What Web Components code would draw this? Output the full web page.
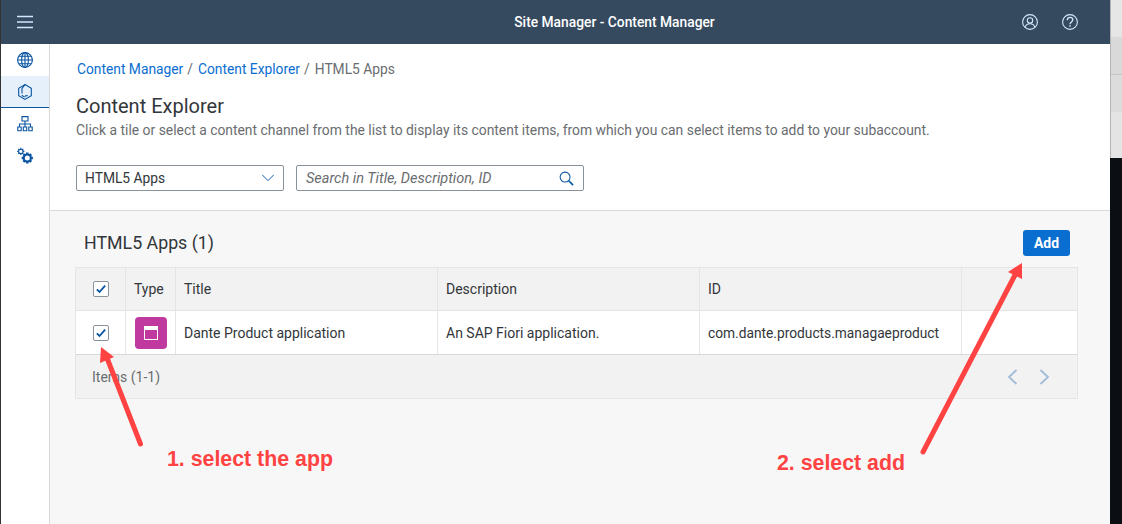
<!DOCTYPE html>
<html>
<head>
<meta charset="utf-8">
<style>
  html, body { margin: 0; height: 100%; overflow: hidden; background: #0b0e12; }
  body { font-family: Roboto, "Liberation Sans", sans-serif; font-size: 14px; color: #32363a; }
</style>
</head>
<body>
<site-manager></site-manager>

<script>
const ICONS = {
  menu: '<path d="M0 2.500h16M0 8h16M0 13.500h16" stroke-width="1.500"/>',
  user: '<circle cx="8" cy="8" r="7.400"/><circle cx="8" cy="6.400" r="2.700"/><path d="M3.200 13.500c.5-2.500 2.400-3.700 4.800-3.700s4.300 1.200 4.800 3.700"/>',
  help: '<circle cx="8" cy="8" r="7.400"/><path d="M5.300 6.200c0-1.700 1.200-2.800 2.800-2.800s2.700 1.100 2.700 2.400c0 2.100-2.800 2.200-2.800 4.400" stroke-width="1.300"/><path d="M8 11.200v1.600" stroke-width="1.400"/>',
  globe: '<circle cx="8" cy="8" r="7.400"/><ellipse cx="8" cy="8" rx="3.400" ry="7.400"/><path d="M8 .6v14.800M.6 8h14.800M1.800 4.200h12.400M1.800 11.800h12.400"/>',
  cube: '<path d="M8 .6l6.300 3.600v7.600L8 15.400l-6.300-3.600V4.200z"/><path d="M8 .6L5 4.500v5M11 11.800H8.500l-1 1.500M4.800 11.200l2 1.500"/>',
  tree: '<path d="M5 .6h6v4.400H5zM8 5v3M2.500 11V8h11v3M8 8v3M.8 11h3.400v3.800H.8zM6.300 11h3.400v3.800H6.300zM11.800 11h3.400v3.800h-3.400z"/>',
  gears: '<circle cx="3.800" cy="3.400" r="2.200"/><path d="M3.800 -.2v1.400M3.800 5.600v1.400M.2 3.400h1.400M6 3.400h1.400M1.300 .9l1 1M5.300 4.900l1 1M1.300 5.900l1-1M5.300 1.900l1-1"/><circle cx="10.300" cy="10" r="3.500" stroke-width="2"/><path d="M10.300 4.400v2.200M10.300 13.400v2.200M4.700 10h2.200M13.700 10h2.200M6.400 6.100l1.500 1.500M12.700 12.400l1.500 1.500M6.400 13.900l1.500-1.500M12.700 7.600l1.500-1.500" stroke-width="2.400"/>',
  down: '<path d="M1.500 4.500L8 11l6.500-6.500"/>',
  search: '<circle cx="6.500" cy="6.500" r="5.300"/><path d="M10.400 10.400L15 15" stroke-width="1.800"/>',
  left: '<path d="M11.500 1L4 8l7.500 7" stroke-width="1.800"/>',
  right: '<path d="M4.500 1L12 8l-7.500 7" stroke-width="1.800"/>',
  check: '<path d="M2.500 8.500l3.500 3.500L13.500 3.500" stroke-width="2.400"/>'
};

class SapIcon extends HTMLElement {
  connectedCallback() {
    const name = this.getAttribute('name');
    const size = this.getAttribute('size') || 16;
    this.attachShadow({ mode: 'open' }).innerHTML = `
      <style>
        :host { display: inline-flex; color: inherit; }
        svg { display: block; fill: none; stroke: currentColor; stroke-width: 1.100; overflow: visible; }
      </style>
      <svg width="${size}" height="${size}" viewBox="0 0 16 16">${ICONS[name]}</svg>`;
  }
}
customElements.define('sap-icon', SapIcon);

class ShellBar extends HTMLElement {
  connectedCallback() {
    this.attachShadow({ mode: 'open' }).innerHTML = `
      <style>
        :host { display: flex; align-items: center; height: 44px; background: #354a5f; color: #fff; flex: none; }
        .menu { width: 48px; display: flex; justify-content: center; color: #d1e8ff; }
        .title { flex: 1; text-align: center; font-size: 13.800px; font-weight: 500; padding-left: 158px; }
        .actions { display: flex; gap: 24px; padding-right: 32px; color: #d1e8ff; }
      </style>
      <div class="menu"><sap-icon name="menu"></sap-icon></div>
      <div class="title">Site Manager - Content Manager</div>
      <div class="actions"><sap-icon name="user"></sap-icon><sap-icon name="help"></sap-icon></div>`;
  }
}
customElements.define('shell-bar', ShellBar);

class SideNav extends HTMLElement {
  connectedCallback() {
    const items = ['globe', 'cube', 'tree', 'gears'];
    this.attachShadow({ mode: 'open' }).innerHTML = `
      <style>
        :host { display: block; width: 49px; box-sizing: border-box; flex: none; background: #fff; border-right: 1px solid #d9d9d9; color: #0854a0; }
        div { height: 32px; display: flex; align-items: center; justify-content: center; box-sizing: border-box; }
        .active { background: #e5f0fa; border-bottom: 1px solid #0854a0; }
      </style>
      ${items.map(n => `<div class="${n === 'cube' ? 'active' : ''}"><sap-icon name="${n}"></sap-icon></div>`).join('')}`;
  }
}
customElements.define('side-nav', SideNav);

class PageHeader extends HTMLElement {
  connectedCallback() {
    this.attachShadow({ mode: 'open' }).innerHTML = `
      <style>
        :host { display: block; background: #fff; border-bottom: 1px solid #d9d9d9; height: 167px; box-sizing: border-box; padding: 16px 26px 0; }
        .crumbs { padding-left: 1px; height: 18px; line-height: 18px; color: #6a6d70; font-size: 13.800px; }
        .crumbs a { color: #0a6ed1; text-decoration: none; }
        .crumbs i { font-style: normal; margin: 0 5px 0 4px; }
        h1 { margin: 15px 0 0; font-size: 20px; font-weight: 400; line-height: 26px; color: #32363a; }
        p { margin: 2px 0 0; font-size: 13.880px; line-height: 18px; color: #6a6d70; }
        .filters { display: flex; gap: 12px; margin-top: 26px; }
      </style>
      <div class="crumbs"><a>Content Manager</a><i>/</i><a>Content Explorer</a><i>/</i>HTML5 Apps</div>
      <h1>Content Explorer</h1>
      <p>Click a tile or select a content channel from the list to display its content items, from which you can select items to add to your subaccount.</p>
      <div class="filters">
        <select-box>HTML5 Apps</select-box>
        <search-box placeholder="Search in Title, Description, ID"></search-box>
      </div>`;
  }
}
customElements.define('page-header', PageHeader);

class SelectBox extends HTMLElement {
  connectedCallback() {
    this.attachShadow({ mode: 'open' }).innerHTML = `
      <style>
        :host { display: flex; align-items: center; justify-content: space-between; width: 208px; height: 26px; box-sizing: border-box; padding: 0 8px; background: #fff; border: 1px solid #89919a; border-radius: 2px; font-size: 13.800px; color: #32363a; }
        sap-icon { color: #0854a0; }
      </style>
      <slot></slot><sap-icon name="down" size="14"></sap-icon>`;
  }
}
customElements.define('select-box', SelectBox);

class SearchBox extends HTMLElement {
  connectedCallback() {
    this.attachShadow({ mode: 'open' }).innerHTML = `
      <style>
        :host { display: flex; align-items: center; justify-content: space-between; width: 288px; height: 26px; box-sizing: border-box; padding: 0 9px 0 9px; background: #fff; border: 1px solid #89919a; border-radius: 2px; font-size: 14.500px; font-style: italic; color: #6a6d70; }
        sap-icon { color: #0854a0; }
      </style>
      <span>${this.getAttribute('placeholder')}</span><sap-icon name="search" size="15"></sap-icon>`;
  }
}
customElements.define('search-box', SearchBox);

class CheckBox extends HTMLElement {
  connectedCallback() {
    this.attachShadow({ mode: 'open' }).innerHTML = `
      <style>
        :host { display: flex; align-items: center; justify-content: center; width: 16px; height: 16px; box-sizing: border-box; background: #fff; border: 1px solid #89919a; border-radius: 2px; color: #0854a0; }
      </style>
      <sap-icon name="check" size="12"></sap-icon>`;
  }
}
customElements.define('check-box', CheckBox);

class AppTile extends HTMLElement {
  connectedCallback() {
    this.attachShadow({ mode: 'open' }).innerHTML = `
      <style>
        :host { display: flex; align-items: center; justify-content: center; width: 32px; height: 32px; background: #c0399f; border-radius: 4px; }
        div { width: 12px; height: 9px; border: 1px solid #fff; border-top-width: 4px; }
      </style>
      <div></div>`;
  }
}
customElements.define('app-tile', AppTile);

class ContentTable extends HTMLElement {
  connectedCallback() {
    this.attachShadow({ mode: 'open' }).innerHTML = `
      <style>
        :host { display: block; margin: 0 32px 0 25px; border: 1px solid #e5e5e5; font-size: 14px; color: #32363a; }
        .row { display: grid; grid-template-columns: 50px 50px 262px 262px 262px 1fr; }
        .row > div { display: flex; align-items: center; padding: 0 8px; border-right: 1px solid #e5e5e5; box-sizing: border-box; }
        .row > div:last-child { border-right: 0; }
        .row > div.center { justify-content: center; padding: 0; }
        .row > div.id { font-size: 13.760px; }
        .head { height: 43px; background: #f2f2f2; border-bottom: 1px solid #e5e5e5; box-sizing: border-box; }
        .body { height: 44px; background: #fff; border-bottom: 1px solid #d9d9d9; box-sizing: border-box; }
        .foot { height: 43px; background: #f2f2f2; display: flex; align-items: center; justify-content: space-between; padding: 0 25px 0 16px; color: #6a6d70; }
        .pager { display: flex; gap: 15px; color: #a0bcd8; }
      </style>
      <div class="row head">
        <div class="center"><check-box></check-box></div>
        <div>Type</div><div>Title</div><div>Description</div><div>ID</div><div></div>
      </div>
      <div class="row body">
        <div class="center"><check-box></check-box></div>
        <div class="center"><app-tile></app-tile></div>
        <div>Dante Product application</div>
        <div>An SAP Fiori application.</div>
        <div class="id">com.dante.products.managaeproduct</div>
        <div></div>
      </div>
      <div class="foot">
        <span>Items (1-1)</span>
        <span class="pager"><sap-icon name="left"></sap-icon><sap-icon name="right"></sap-icon></span>
      </div>`;
  }
}
customElements.define('content-table', ContentTable);

class ResultPanel extends HTMLElement {
  connectedCallback() {
    this.attachShadow({ mode: 'open' }).innerHTML = `
      <style>
        :host { display: block; flex: 1; background: #f7f7f7; }
        .bar { display: flex; align-items: center; justify-content: space-between; box-sizing: border-box; height: 56px; padding: 7px 40px 0 34px; }
        h2 { margin: 0; font-size: 17.800px; font-weight: 400; color: #32363a; }
        button { width: 47px; height: 26px; margin-top: 1px; border: 0; border-radius: 3px; background: #0a6ed1; color: #fff; font: 700 14px Roboto, "Liberation Sans", sans-serif; padding: 0; }
      </style>
      <div class="bar"><h2>HTML5 Apps (1)</h2><button>Add</button></div>
      <content-table></content-table>`;
  }
}
customElements.define('result-panel', ResultPanel);

class AnnotationLayer extends HTMLElement {
  connectedCallback() {
    this.attachShadow({ mode: 'open' }).innerHTML = `
      <style>
        :host { position: absolute; inset: 0; pointer-events: none; }
        svg { position: absolute; inset: 0; }
        span { position: absolute; color: #ff4343; font: 700 21.330px "Liberation Sans", sans-serif; white-space: nowrap; }
      </style>
      <svg width="1122" height="524" fill="#ff4343" stroke="#ff4343">
        <path d="M140.500 444L107 358" stroke-width="5" stroke-linecap="round"/>
        <path d="M101 347l13 10-14 6z" stroke="none"/>
        <path d="M923 452L1015 275" stroke-width="5" stroke-linecap="round"/>
        <path d="M1022 263l0 16-14-7z" stroke="none"/>
      </svg>
      <span style="left:167px;top:447px">1. select the app</span>
      <span style="left:777px;top:451px">2. select add</span>`;
  }
}
customElements.define('annotation-layer', AnnotationLayer);

class SiteManager extends HTMLElement {
  connectedCallback() {
    this.attachShadow({ mode: 'open' }).innerHTML = `
      <style>
        :host { display: flex; height: 524px; width: 1122px; position: relative; }
        .win { width: 1110px; height: 524px; display: flex; flex-direction: column; border-left: 1px solid #333; box-sizing: border-box; }
        .main { flex: 1; display: flex; min-height: 0; }
        .content { flex: 1; display: flex; flex-direction: column; min-width: 0; }
        .strip { flex: 1; height: 158px; display: flex; flex-direction: column; border-left: 1px solid #b4b4b4; }
        .strip div { background: #dcdcdc; }
      </style>
      <div class="win">
        <shell-bar></shell-bar>
        <div class="main">
          <side-nav></side-nav>
          <div class="content"><page-header></page-header><result-panel></result-panel></div>
        </div>
      </div>
      <div class="strip">
        <div style="height:37px;background:#e6e6e6"></div>
        <div style="height:37px;background:#d9d9d9;border-bottom:1px solid #c4c4c4"></div>
        <div style="height:37px;background:#dcdcdc"></div>
        <div style="height:46px;background:#e4e4e4"></div>
      </div>
      <annotation-layer></annotation-layer>`;
  }
}
customElements.define('site-manager', SiteManager);
</script>
</body>
</html>
